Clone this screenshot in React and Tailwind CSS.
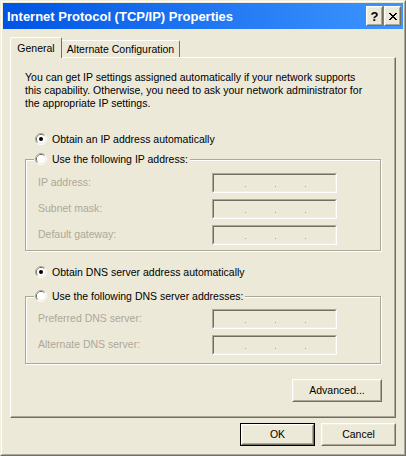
import React from 'react';

// classic caption "x" glyph, one rect per lit pixel
const CLOSE_ROWS = ['11000011', '01100110', '00111100', '00011000', '00111100', '01100110', '11000011'];

function CloseGlyph() {
  return (
    <svg width="8" height="7" viewBox="0 0 8 7" shapeRendering="crispEdges">
      {CLOSE_ROWS.flatMap((row, y) =>
        [...row].map((c, x) =>
          c === '1' ? <rect key={`${x}-${y}`} x={x} y={y} width="1" height="1" fill="#000" /> : null
        )
      )}
    </svg>
  );
}

const Raised = ({ className = '', children }) => (
  <div className={`border border-t-white border-l-white border-r-[#716F64] border-b-[#716F64] bg-[#ECE9D8] ${className}`}>
    <div className="h-full w-full border border-t-[#F1EFE2] border-l-[#F1EFE2] border-r-[#ACA899] border-b-[#ACA899] flex items-center justify-center">
      {children}
    </div>
  </div>
);

function Radio({ checked, label }) {
  return (
    <div className="flex items-center h-[14px] gap-[5px]">
      <svg width="12" height="12" viewBox="0 0 12 12">
        <path d="M2.11 9.89 A5.5 5.5 0 0 1 9.89 2.11" fill="none" stroke="#ACA899" />
        <path d="M9.89 2.11 A5.5 5.5 0 0 1 2.11 9.89" fill="none" stroke="#FFFFFF" />
        <path d="M2.82 9.18 A4.5 4.5 0 0 1 9.18 2.82" fill="none" stroke="#716F64" />
        <path d="M9.18 2.82 A4.5 4.5 0 0 1 2.82 9.18" fill="none" stroke="#F1EFE2" />
        <circle cx="6" cy="6" r="4" fill="#FFFFFF" />
        {checked && <circle cx="6" cy="6" r="2" fill="#000" />}
      </svg>
      <span className="leading-[14px]">{label}</span>
    </div>
  );
}

function IpBox() {
  return (
    <div className="w-[125px] h-[20px] border border-t-[#ACA899] border-l-[#ACA899] border-r-white border-b-white">
      <div className="h-full border border-t-[#716F64] border-l-[#716F64] border-r-[#F1EFE2] border-b-[#F1EFE2] flex items-end pb-[4px] pl-[31px] gap-[29px]">
        <span className="w-px h-px bg-[#ACA899]" />
        <span className="w-px h-px bg-[#ACA899]" />
        <span className="w-px h-px bg-[#ACA899]" />
      </div>
    </div>
  );
}

function AddressGroup({ legend, fields, pt, pb }) {
  return (
    <fieldset
      className={`w-[356px] border border-[#ACA899] shadow-[1px_1px_0_#FFFFFF,inset_1px_1px_0_#FFFFFF] flex flex-col gap-[6px] ${pt} ${pb}`}
    >
      <legend className="ml-[8px] pl-px pr-[2px] bg-[#ECE9D8]">
        <Radio label={legend} />
      </legend>
      {fields.map((f) => (
        <div key={f} className="flex items-center h-[20px] pl-[12px]">
          <span className="w-[174px] text-[#ACA899]">{f}</span>
          <IpBox />
        </div>
      ))}
    </fieldset>
  );
}

export default function App() {
  return (
    <div className="w-[406px] h-[456px] border border-t-[#F1EFE2] border-l-[#F1EFE2] border-r-[#716F64] border-b-[#716F64] font-['Liberation_Sans',Arial,sans-serif] text-[10.5px] text-black">
      <div className="h-full border border-t-white border-l-white border-r-[#ACA899] border-b-[#ACA899] bg-[#ECE9D8] p-px flex flex-col">
        {/* caption */}
        <div className="h-[26px] flex items-center bg-gradient-to-r from-[#0054E3] to-[#3D95FF] pl-[4px] pr-[2px]">
          <span className="flex-1 text-white font-bold text-[13px] leading-none">
            Internet Protocol (TCP/IP) Properties
          </span>
          <div className="flex gap-[1px]">
            <Raised className="w-[17px] h-[20px]">
              <span className="font-bold text-[13px] leading-none">?</span>
            </Raised>
            <Raised className="w-[17px] h-[20px]">
              <CloseGlyph />
            </Raised>
          </div>
        </div>

        <div className="px-[7px] pt-[8px] flex flex-col">
          {/* tabs */}
          <div className="flex items-end h-[20px] relative z-10">
            <div className="h-[21px] w-[52px] -mb-px bg-[#ECE9D8] border-t border-l border-r border-t-white border-l-white border-r-[#716F64] rounded-t-[2px] flex justify-center pt-[3px] leading-[14px]">
              General
            </div>
            <div className="h-[17px] w-[118px] bg-[#ECE9D8] border-t border-r border-t-white border-r-[#716F64] rounded-tr-[2px] flex justify-center pt-px leading-[14px]">
              Alternate Configuration
            </div>
          </div>

          {/* General page */}
          <div className="h-[361px] w-[386px] border border-t-white border-l-white border-r-[#716F64] border-b-[#716F64] shadow-[inset_-1px_-1px_0_#ACA899] pt-[13px] pl-[14px] flex flex-col">
            <p className="leading-[13px] whitespace-nowrap">
              You can get IP settings assigned automatically if your network supports
              <br />
              this capability. Otherwise, you need to ask your network administrator for
              <br />
              the appropriate IP settings.
            </p>

            <div className="mt-[22px] ml-[10px]">
              <Radio checked label="Obtain an IP address automatically" />
            </div>
            <div className="mt-[6px]">
              <AddressGroup
                legend="Use the following IP address:"
                fields={['IP address:', 'Subnet mask:', 'Default gateway:']}
                pt="pt-[7px]"
                pb="pb-[5px]"
              />
            </div>

            <div className="mt-[14px] ml-[10px]">
              <Radio checked label="Obtain DNS server address automatically" />
            </div>
            <div className="mt-[10px]">
              <AddressGroup
                legend="Use the following DNS server addresses:"
                fields={['Preferred DNS server:', 'Alternate DNS server:']}
                pt="pt-[6px]"
                pb="pb-[8px]"
              />
            </div>

            <Raised className="mt-[15px] ml-[267px] w-[90px] h-[23px]">
              <span>Advanced...</span>
            </Raised>
          </div>

          {/* dialog buttons */}
          <div className="mt-[5px] flex justify-end gap-[6px] w-[386px]">
            <div className="border border-black">
              <Raised className="w-[73px] h-[21px]">
                <span>OK</span>
              </Raised>
            </div>
            <Raised className="w-[75px] h-[23px]">
              <span>Cancel</span>
            </Raised>
          </div>
        </div>
      </div>
    </div>
  );
}
